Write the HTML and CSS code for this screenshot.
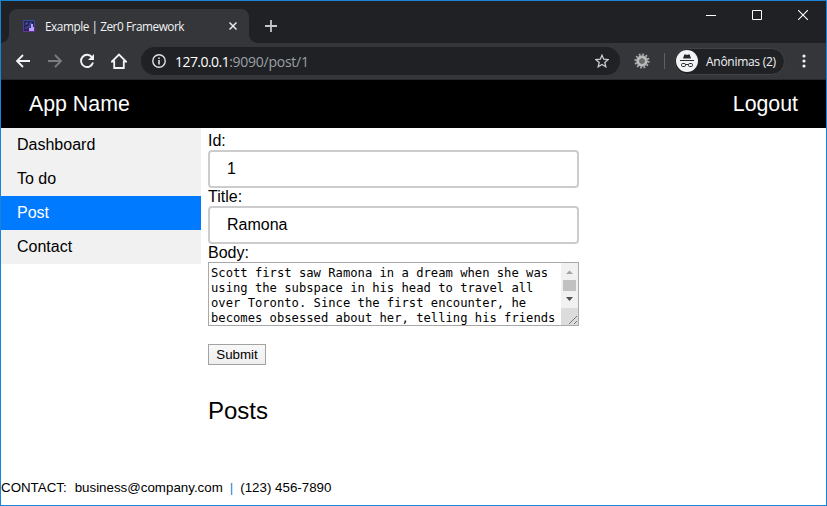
FILE: index.html
```
<!DOCTYPE html>
<html lang="en">
<head>
<meta charset="utf-8">
<title>Example | Zer0 Framework</title>
<link rel="stylesheet" href="styles.css">
</head>
<body>
<div class="window">
  <div class="tabstrip">
    <div class="tab">
      <svg class="favicon" width="12" height="12" viewBox="0 0 12 12"><path fill="#292554" d="M0 0h12v12H0z"/><path fill="none" stroke="#304da0" d="M.5 6V.5h11V6"/><path fill="none" stroke="#64309a" d="M.5 6v5.500h11V6"/><path fill="none" stroke="#5359c5" d="M2 4h2V2M4 7h3V3h2M2 8h2"/><path fill="#b7a0ff" d="M8 4h2v3h1v4H6V8h2z"/></svg>
      <span class="tab-title">Example | Zer0 Framework</span>
      <svg class="tab-close" width="8" height="8" viewBox="0 0 8 8"><path d="M.5.5l7 7M7.500.5l-7 7" stroke="#e8eaed" stroke-width="1.500"/></svg>
    </div>
    <svg class="plus" width="12" height="12" viewBox="0 0 12 12"><path d="M6 0v12M0 6h12" stroke="#c4c6c9" stroke-width="1.800"/></svg>
    <div class="controls">
      <svg width="10" height="10" viewBox="0 0 10 10"><path d="M0 5.500h10" stroke="#fff"/></svg>
      <svg width="10" height="10" viewBox="0 0 10 10"><path d="M.5.5h9v9h-9z" fill="none" stroke="#fff"/></svg>
      <svg width="10" height="10" viewBox="0 0 10 10"><path d="M0 0l10 10M10 0L0 10" stroke="#fff" stroke-width="1.100"/></svg>
    </div>
  </div>
  <div class="toolbar">
    <svg class="nav" width="16" height="16" viewBox="0 0 16 16"><path d="M15 8H2.500M8 2L2 8l6 6" fill="none" stroke="#f1f3f4" stroke-width="1.800"/></svg>
    <svg class="nav" width="16" height="16" viewBox="0 0 16 16"><path d="M1 8h12.500M8 2l6 6-6 6" fill="none" stroke="#7b7c7f" stroke-width="1.800"/></svg>
    <svg class="nav" width="16" height="16" viewBox="0 0 16 16"><path d="M13.200 4.500A6.100 6.100 0 1 0 14 9.500" fill="none" stroke="#f1f3f4" stroke-width="1.900"/><path d="M15 1v6H9z" fill="#f1f3f4"/></svg>
    <svg class="nav" width="16" height="16" viewBox="0 0 16 16"><path d="M1 8.500L8 1.500l7 7h-2.200V15H3.200V8.500z" fill="none" stroke="#f1f3f4" stroke-width="1.800"/></svg>
    <div class="address">
      <svg width="14" height="14" viewBox="0 0 14 14"><circle cx="7" cy="7" r="6.200" fill="none" stroke="#dfe1e5" stroke-width="1.400"/><path d="M7 6v4.500M7 3.500V5" stroke="#dfe1e5" stroke-width="1.600"/></svg>
      <span class="url">127.0.0.1<span class="path">:9090/post/1</span></span>
      <svg class="star" width="14" height="14" viewBox="0 0 14 14"><path d="M7 1.200l1.700 4 4.400.4-3.300 2.900 1 4.300L7 10.500l-3.800 2.300 1-4.300L.9 5.600l4.400-.4z" fill="none" stroke="#c9cbce" stroke-width="1.300"/></svg>
    </div>
    <svg class="gear" width="16" height="16" viewBox="0 0 16 16"><circle cx="8" cy="8" r="6.600" fill="none" stroke="#aaa" stroke-width="2" stroke-dasharray="1.800 1.656"/><circle cx="8" cy="8" r="4.200" fill="none" stroke="#b8b8b8" stroke-width="3.200"/><circle cx="8" cy="8" r="2.400" fill="#6b6b6b"/></svg>
    <span class="divider"></span>
    <div class="profile">
      <svg width="22" height="22" viewBox="0 0 22 22"><circle cx="11" cy="11" r="11" fill="#f1f3f4"/><path d="M7 8.500L8.300 4.500h1.500l1.200.5 1.200-.5h1.500L15 8.500zM4 10h14v1H4z" fill="#25262a"/><g fill="none" stroke="#25262a"><rect x="5.500" y="13.500" width="4" height="3" rx="1.200"/><rect x="12.500" y="13.500" width="4" height="3" rx="1.200"/><path d="M9.500 14.500h3"/></g></svg>
      <span>Anônimas (2)</span>
    </div>
    <svg class="more" width="4" height="14" viewBox="0 0 4 14"><g fill="#f1f3f4"><circle cx="2" cy="2" r="1.600"/><circle cx="2" cy="7" r="1.600"/><circle cx="2" cy="12" r="1.600"/></g></svg>
  </div>
  <header class="app-header"><span>App Name</span><span>Logout</span></header>
  <div class="main">
    <nav class="sidebar">
      <a>Dashboard</a>
      <a>To do</a>
      <a class="active">Post</a>
      <a>Contact</a>
    </nav>
    <main class="content">
      <label>Id:</label>
      <input type="text" value="1">
      <label>Title:</label>
      <input type="text" value="Ramona">
      <label>Body:</label>
      <div class="textarea">
        <div class="body-text">Scott first saw Ramona in a dream when she was
using the subspace in his head to travel all
over Toronto. Since the first encounter, he
becomes obsessed about her, telling his friends</div>
        <svg class="scroll" width="17" height="62" viewBox="0 0 17 62"><path fill="#f1f1f1" d="M0 0h17v62H0z"/><path fill="#a3a3a3" d="M5 11h7L8.500 7.500z"/><path fill="#c1c1c1" d="M2 17h13v11H2z"/><path fill="#505050" d="M5 34h7l-3.500 4z"/><path fill="#dcdcdc" d="M0 45h17v17H0z"/><path d="M8 61l8-8M13 61l3-3" stroke="#777" stroke-width="1"/></svg>
      </div>
      <button type="button">Submit</button>
      <h2>Posts</h2>
    </main>
  </div>
  <footer><span>CONTACT:</span><span class="mail">business@company.com</span><span class="bar">|</span><span>(123) 456-7890</span></footer>
</div>
</body>
</html>
```
FILE: styles.css
```
* { box-sizing: border-box; }
body { margin: 0; font-family: "Liberation Sans", Arial, sans-serif; font-size: 16px; color: #000; }
svg { display: block; flex: none; }
.window { width: 827px; height: 506px; border: 1px solid #1883d7; background: #fff; display: flex; flex-direction: column; overflow: hidden; }
.tabstrip { height: 42px; flex: none; background: #202124; display: flex; padding: 8px 18px 0 8px; }
.tab { width: 240px; height: 34px; background: #35363a; border-radius: 8px 8px 0 0; display: flex; align-items: center; padding: 0 12px 0 14px; position: relative; color: #f1f3f4; font: 12px "Open Sans", sans-serif; }
.tab::before, .tab::after { content: ""; position: absolute; bottom: 0; width: 8px; height: 8px; }
.tab::before { left: -8px; background: radial-gradient(circle at 0 0, transparent 7.500px, #35363a 8px); }
.tab::after { right: -8px; background: radial-gradient(circle at 100% 0, transparent 7.500px, #35363a 8px); }
.tab-title { margin-left: 10px; white-space: nowrap; font-size: 11.800px; letter-spacing: -0.450px; }
.tab-close { margin-left: auto; }
.plus { margin: 11px 0 0 16px; }
.controls { margin-left: auto; display: flex; gap: 36px; padding-top: 1px; }
.toolbar { height: 37px; flex: none; background: #35363a; border-bottom: 1px solid #28292c; display: flex; align-items: center; padding-left: 14px; }
.nav { margin-right: 16px; }
.address { width: 479px; height: 28px; margin-left: -2px; border-radius: 14px; background: #202124; display: flex; align-items: center; padding: 0 11px; }
.url { margin-left: 9px; color: #fff; font: 14px "Open Sans", sans-serif; letter-spacing: -0.550px; }
.path { color: #9aa0a6; letter-spacing: -0.250px; }
.star { margin-left: auto; }
.gear { margin-left: 14px; }
.divider { width: 1px; height: 16px; margin-left: 14px; background: #5f6063; }
.profile { width: 111px; height: 27px; margin-left: 9px; border: 1px solid #424347; border-radius: 14px; background: #202124; color: #f1f3f4; display: flex; align-items: center; padding-left: 1px; font: 12px "Open Sans", sans-serif; letter-spacing: -0.280px; white-space: nowrap; }
.profile span { margin-left: 8px; }
.more { margin-left: 17px; }
.app-header { height: 48px; flex: none; background: #000; color: #fff; display: flex; align-items: center; justify-content: space-between; padding: 0 28px; font-size: 21.330px; }
.main { display: flex; flex: 1; }
.sidebar { width: 200px; flex: none; }
.sidebar a { display: block; height: 34px; line-height: 33px; padding-left: 16px; background: #f1f1f1; }
.sidebar .active { background: #007bff; color: #fff; }
.content { width: 378px; padding: 4px 0 0 7px; }
label { display: block; height: 18px; line-height: 18px; }
input { display: block; width: 371px; height: 38px; margin: 0; padding: 0 17px; border: 2px solid #ccc; border-radius: 4px; font: 16px "Liberation Sans", sans-serif; color: #000; background: #fff; }
.textarea { width: 371px; height: 64px; border: 1px solid #a9a9a9; display: flex; justify-content: space-between; overflow: hidden; }
.body-text { padding: 3px 0 0 2px; white-space: pre; font: 12.180px/15px "DejaVu Sans Mono", monospace; }
button { display: block; width: 58px; height: 21px; margin: 18px 0 0; padding: 0; border: 1px solid #a2a2a2; border-radius: 0; background: linear-gradient(#f8f8f8, #eee); font: 13.333px "Liberation Sans", sans-serif; color: #000; }
h2 { margin: 32px 0 0; font-size: 24px; line-height: 28px; font-weight: 400; }
footer { display: flex; height: 34px; flex: none; font-size: 13.333px; line-height: 34px; }
.mail { margin-left: 8px; }
.bar { margin: 0 7px; color: #1883d7; }
```
